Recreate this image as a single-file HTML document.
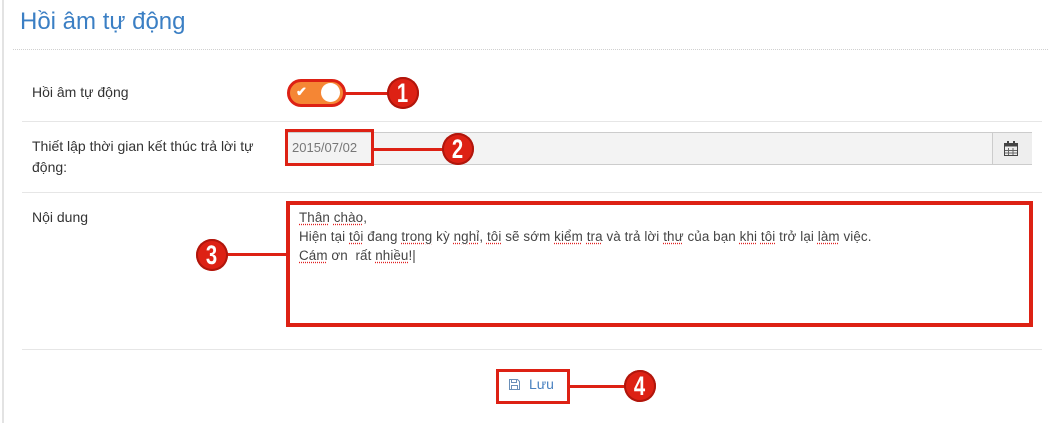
<!DOCTYPE html>
<html><head><meta charset="utf-8"><style>
body{margin:0;width:1048px;height:423px;background:#fff;position:relative;overflow:hidden;font-family:"Liberation Sans",sans-serif;color:#333}
.a{position:absolute}
.sep{position:absolute;left:22px;width:1020px;height:1px;background:#e6e6e6}
.lbl{position:absolute;left:32px;font-size:14px;line-height:21px;color:#333}
.red{position:absolute;background:#dd2114}
.num{position:absolute;width:32px;height:32px;border-radius:50%;background:#dd2114;color:#fff;font:bold 27px/32px "Liberation Sans",sans-serif;text-align:center;box-shadow:inset 0 0 0 2px #b0160c}
.num span{display:inline-block;transform:scaleX(0.75)}
u{text-decoration:underline dotted #e02020;text-underline-offset:2px}
</style></head><body>
<div class="a" style="left:2px;top:0;width:2px;height:423px;background:#e3e3e3"></div>
<div class="a" style="left:20px;top:6px;font-size:24px;color:#3b7fc4;line-height:32px">Hồi âm tự động</div>
<div class="a" style="left:13px;top:49px;width:1035px;border-top:1px dotted #d0d0d0"></div>

<div class="lbl" style="top:82px">Hồi âm tự động</div>
<div class="a" style="left:287px;top:79px;width:53px;height:22px;border:3px solid #dd2114;border-radius:14px;background:#f58634"></div>
<div class="a" style="left:321px;top:83px;width:19px;height:19px;border-radius:50%;background:#fff"></div>
<div class="a" style="left:296px;top:84px;color:#fff;font-size:13px;font-weight:bold">✔</div>
<div class="red" style="left:345px;top:92px;width:45px;height:3px"></div>
<div class="num" style="left:387px;top:77px"><span>1</span></div>

<div class="sep" style="top:121px"></div>
<div class="lbl" style="top:136px;width:250px">Thiết lập thời gian kết thúc trả lời tự động:</div>
<div class="a" style="left:285px;top:132px;width:745px;height:31px;border:1px solid #ccc;background:#f3f3f3"></div>
<div class="a" style="left:992px;top:133px;width:39px;height:31px;border-left:1px solid #ccc;background:#eee"></div>
<svg class="a" style="left:1004px;top:141px" width="14" height="15" viewBox="0 0 14 15"><rect x="0.5" y="2.5" width="13" height="12" fill="none" stroke="#444"/><rect x="0.5" y="2.5" width="13" height="3" fill="#444"/><path d="M4.5 7v7M9 7v7M1 9.5h12M1 12h12" stroke="#666"/><rect x="3" y="0" width="2" height="4" fill="#444"/><rect x="9" y="0" width="2" height="4" fill="#444"/></svg>
<div class="a" style="left:285px;top:129px;width:83px;height:31px;border:3px solid #dd2114"></div>
<div class="a" style="left:292px;top:140px;font-size:13px;color:#777">2015/07/02</div>
<div class="red" style="left:374px;top:148px;width:72px;height:3px"></div>
<div class="num" style="left:442px;top:133px"><span>2</span></div>

<div class="sep" style="top:192px"></div>
<div class="lbl" style="top:207px">Nội dung</div>
<div class="a" style="left:286px;top:201px;width:739px;height:118px;border:4px solid #dd2114"></div>
<div class="a" style="left:299px;top:208px;font-size:13.4px;line-height:19px;color:#444;letter-spacing:0.1px"><u>Thân</u> <u>chào</u>,<br>Hiện tại <u>tôi</u> đang <u>trong</u> kỳ <u>nghỉ</u>, <u>tôi</u> sẽ sớm <u>kiểm</u> <u>tra</u> và trả lời <u>thư</u> của bạn <u>khi</u> <u>tôi</u> trở lại <u>làm</u> việc.<br><u>Cám</u> ơn &nbsp;rất <u>nhiều</u>!|</div>
<div class="red" style="left:222px;top:253px;width:65px;height:3px"></div>
<div class="num" style="left:196px;top:239px"><span>3</span></div>

<div class="sep" style="top:349px"></div>
<div class="a" style="left:496px;top:369px;width:68px;height:29px;border:3px solid #dd2114"></div>
<svg class="a" style="left:509px;top:379px" width="11" height="11" viewBox="0 0 11 11"><path d="M0.5 0.5h8l2 2v8h-10z" fill="none" stroke="#6a8fb8"/><rect x="2.5" y="0.5" width="5" height="3" fill="none" stroke="#6a8fb8"/><rect x="2.5" y="6.5" width="6" height="4" fill="none" stroke="#6a8fb8"/></svg>
<div class="a" style="left:529px;top:376px;font-size:14px;color:#4a82c0">Lưu</div>
<div class="red" style="left:570px;top:385px;width:60px;height:3px"></div>
<div class="num" style="left:624px;top:370px"><span>4</span></div>
</body></html>
